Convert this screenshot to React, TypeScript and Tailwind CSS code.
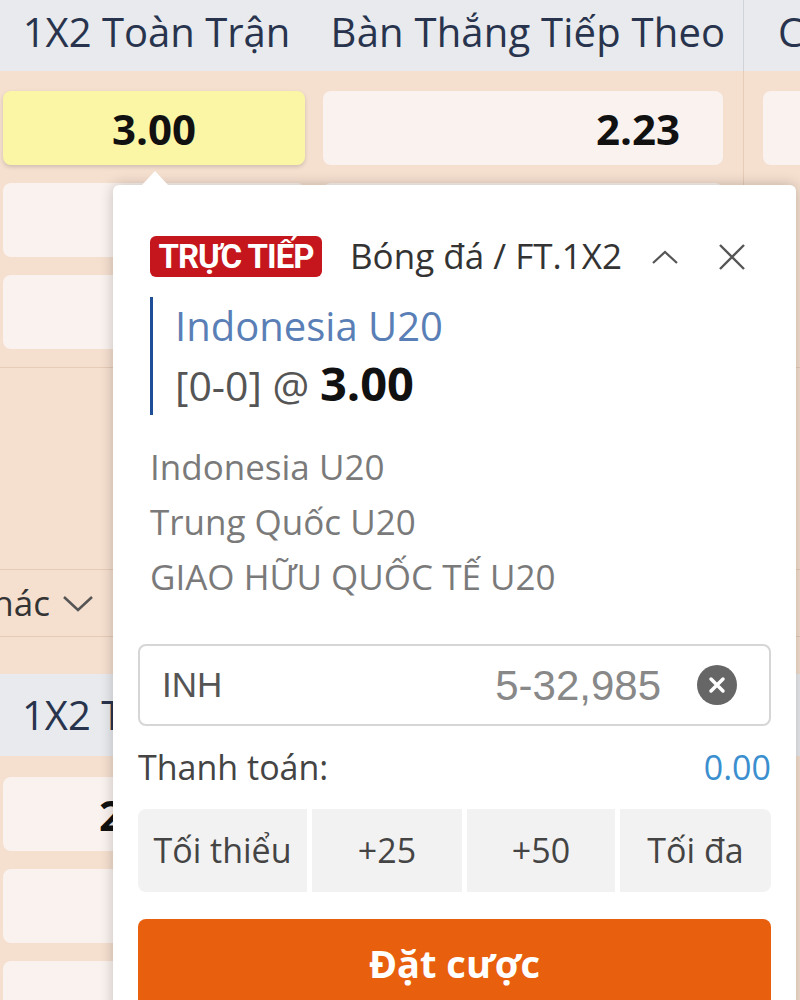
import React from "react";

const F = { fontFamily: '"Open Sans", "Noto Sans", sans-serif' };

function OddBtn({ children, yellow, align = "center", extra = "" }: { children?: React.ReactNode; yellow?: boolean; align?: "center" | "right"; extra?: string }) {
  return (
    <div
      className={`h-[74px] rounded-[8px] flex items-center text-[42px] font-bold text-[#111] ${
        yellow ? "bg-[#fbf5a6] shadow-[0_2px_4px_rgba(0,0,0,0.15)]" : "bg-[#faf2ee]"
      } ${align === "center" ? "justify-center" : "justify-end pr-[43px]"} ${extra}`}
    >
      {children}
    </div>
  );
}

export default function App() {
  return (
    <div className="relative w-[800px] h-[1000px] overflow-hidden bg-[#f5dfcf]" style={F}>
      {/* header 1 */}
      <div className="flex h-[71px] bg-[#e8eaed] text-[40px] text-[#28344d] items-center whitespace-nowrap pb-[8px]">
        <div className="w-[313px] shrink-0 text-center">1X2 Toàn Trận</div>
        <div className="w-[431px] shrink-0 h-[71px] mb-[-8px] pb-[8px] flex items-center justify-center border-r border-[#d0d3d8] tracking-[0.2px]">Bàn Thắng Tiếp Theo</div>
        <div className="pl-[34px] shrink-0">Cược Chấp</div>
      </div>
      {/* section 1 */}
      <div className="flex h-[297px] border-b border-[#e6cbb7]">
        <div className="w-[313px] shrink-0 pl-[3px] pr-[8px] pt-[20px] flex flex-col gap-[18px]">
          <OddBtn yellow>3.00</OddBtn>
          <OddBtn />
          <OddBtn />
        </div>
        <div className="w-[431px] shrink-0 pl-[10px] pr-[20px] pt-[20px] flex flex-col gap-[18px] border-r border-[#e6cbb7]">
          <OddBtn align="right">2.23</OddBtn>
          <OddBtn align="right" />
        </div>
        <div className="flex-1 pl-[19px] pt-[20px]">
          <div className="h-[74px] rounded-l-[8px] bg-[#faf2ee]" />
        </div>
      </div>
      {/* empty */}
      <div className="h-[202px] border-b border-[#e6cbb7]" />
      {/* khac row */}
      <div className="h-[67px] border-b border-[#e6cbb7] flex items-center">
        <div className="w-[94px] flex justify-end items-center gap-[12px] overflow-hidden whitespace-nowrap text-[35px] text-[#333]">
          <span>Kèo khác</span>
          <svg width="32" height="18" viewBox="0 0 32 18" className="shrink-0">
            <path d="M2 3 L16 16 L30 3" fill="none" stroke="#555" strokeWidth="2.5" />
          </svg>
        </div>
      </div>
      <div className="h-[37px]" />
      {/* header 2 */}
      <div className="flex h-[82px] bg-[#e8eaed] text-[40px] text-[#28344d] items-center whitespace-nowrap">
        <div className="w-[313px] pl-[22px]">1X2 Toàn Trận</div>
      </div>
      <div className="w-[313px] pl-[3px] pr-[8px] pt-[21px] flex flex-col gap-[18px]">
        <OddBtn extra="pr-[26px]">2.50</OddBtn>
        <OddBtn />
        <OddBtn />
      </div>

      {/* popup */}
      <div className="absolute left-[113px] top-[185px] w-[683px] h-[840px] bg-white rounded-[6px] shadow-[0_0_14px_rgba(0,0,0,0.22)] px-[25px] pt-[51px]">
        {/* caret */}
        <div className="absolute left-[28px] top-[-14px] w-0 h-0 border-l-[14px] border-r-[14px] border-b-[15px] border-l-transparent border-r-transparent border-b-white" />
        <div className="pl-[12px] pr-[24px]">
          <div className="flex items-center h-[41px]">
            <div
              className="h-[41px] w-[172px] shrink-0 rounded-[6px] bg-[#c4161c] text-white text-[33px] leading-none font-bold flex items-center justify-center tracking-[-1px] whitespace-nowrap"
              style={{ fontFamily: '"Roboto", "Liberation Sans", sans-serif' }}
            >
              TRỰC TIẾP
            </div>
            <div className="ml-[28px] text-[35px] text-[#333] whitespace-nowrap">Bóng đá / FT.1X2</div>
            <svg width="30" height="18" viewBox="0 0 30 18" className="ml-[28px] shrink-0">
              <path d="M3 15 L15 4 L27 15" fill="none" stroke="#555" strokeWidth="2.2" />
            </svg>
            <svg width="28" height="28" viewBox="0 0 28 28" className="ml-[38px] shrink-0">
              <path d="M2 2 L26 26 M26 2 L2 26" fill="none" stroke="#555" strokeWidth="2.4" />
            </svg>
          </div>
          <div className="mt-[20px] border-l-[3px] border-[#1f4e98] pl-[22px] h-[118px] flex flex-col justify-center">
            <div className="text-[40px] leading-[56px] text-[#5a7fb6] whitespace-nowrap">Indonesia U20</div>
            <div className="leading-[58px] text-[#555] text-[41px] whitespace-nowrap">
              [0-0] @ <span className="text-[47px] font-bold text-[#111]">3.00</span>
            </div>
          </div>
          <div className="mt-[24px] text-[35px] leading-[55px] text-[#7a7a7a] whitespace-nowrap">
            <div>Indonesia U20</div>
            <div>Trung Quốc U20</div>
            <div>GIAO HỮU QUỐC TẾ U20</div>
          </div>
        </div>
        {/* input */}
        <div
          className="mt-[40px] h-[82px] border-2 border-[#d6d6d6] rounded-[8px] flex items-center pl-[22px] pr-[32px]"
          style={{ fontFamily: '"Liberation Sans", Arial, sans-serif' }}
        >
          <span className="text-[35px] text-[#555]">INH</span>
          <span className="ml-auto text-[42px] text-[#888]">5-32,985</span>
          <div className="ml-[36px] w-[40px] h-[40px] shrink-0 rounded-full bg-[#666] flex items-center justify-center">
            <svg width="20" height="20" viewBox="0 0 20 20">
              <path d="M4 4 L16 16 M16 4 L4 16" stroke="white" strokeWidth="3.5" strokeLinecap="round" />
            </svg>
          </div>
        </div>
        <div className="flex items-center justify-between h-[83px] text-[34px]">
          <span className="text-[#444]">Thanh toán:</span>
          <span className="text-[#3b8fcf]">0.00</span>
        </div>
        <div className="flex gap-[5px] h-[83px] text-[34px] text-[#444]">
          <div className="w-[169px] bg-[#f2f2f2] rounded-l-[8px] flex items-center justify-center">Tối thiểu</div>
          <div className="w-[150px] bg-[#f2f2f2] flex items-center justify-center">+25</div>
          <div className="w-[148px] bg-[#f2f2f2] flex items-center justify-center">+50</div>
          <div className="flex-1 bg-[#f2f2f2] rounded-r-[8px] flex items-center justify-center">Tối đa</div>
        </div>
        <div className="mt-[27px] h-[88px] rounded-[8px] bg-[#e8600e] flex items-center justify-center text-white text-[38px] font-bold">
          Đặt cược
        </div>
      </div>
    </div>
  );
}
